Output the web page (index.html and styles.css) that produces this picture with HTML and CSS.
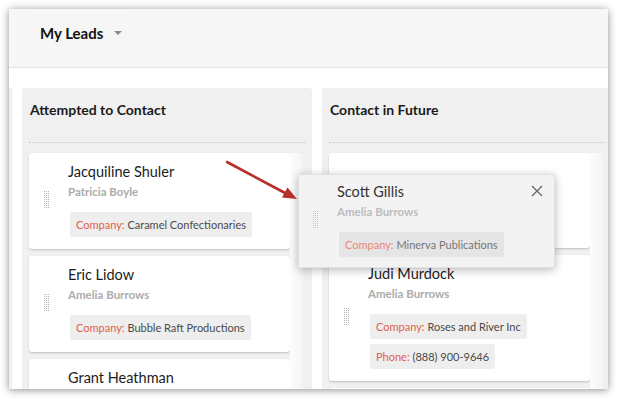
FILE: index.html
```html
<!DOCTYPE html>
<html lang="en">
<head>
    <meta charset="UTF-8">
    <meta name="viewport" content="width=device-width, initial-scale=1.0">
    <title>My Leads - Kanban</title>
    <link rel="stylesheet" href="styles.css">
</head>
<body>
    <div class="window">
        <div class="topbar">
            <div class="view-picker">
                <span class="view-name">My Leads</span>
                <span class="caret"></span>
            </div>
        </div>

        <div class="board">
            <div class="column stub"></div>

            <div class="column">
                <div class="column-head">Attempted to Contact</div>
                <div class="lane">
                    <div class="cards">
                        <div class="card">
                            <span class="grip"></span>
                            <div class="card-body">
                                <div class="name">Jacquiline Shuler</div>
                                <div class="owner">Patricia Boyle</div>
                                <div class="tags">
                                    <span class="tag"><em>Company:</em> Caramel Confectionaries</span>
                                </div>
                            </div>
                        </div>
                        <div class="card">
                            <span class="grip"></span>
                            <div class="card-body">
                                <div class="name">Eric Lidow</div>
                                <div class="owner">Amelia Burrows</div>
                                <div class="tags">
                                    <span class="tag"><em>Company:</em> Bubble Raft Productions</span>
                                </div>
                            </div>
                        </div>
                        <div class="card">
                            <div class="card-body indent">
                                <div class="name">Grant Heathman</div>
                            </div>
                        </div>
                    </div>
                    <div class="scroll-track"></div>
                </div>
            </div>

            <div class="column">
                <div class="column-head">Contact in Future</div>
                <div class="lane">
                    <div class="cards">
                        <div class="card placeholder"></div>
                        <div class="card">
                            <span class="grip"></span>
                            <div class="card-body">
                                <div class="name">Judi Murdock</div>
                                <div class="owner">Amelia Burrows</div>
                                <div class="tags">
                                    <span class="tag"><em>Company:</em> Roses and River Inc</span>
                                    <span class="tag"><em>Phone:</em> (888) 900-9646</span>
                                </div>
                            </div>
                        </div>
                        <div class="card placeholder"></div>
                    </div>
                    <div class="scroll-track"></div>
                </div>
            </div>
        </div>

        <!-- card being dragged -->
        <div class="card dragging">
            <span class="grip"></span>
            <div class="card-body">
                <div class="name">Scott Gillis</div>
                <div class="owner">Amelia Burrows</div>
                <div class="tags">
                    <span class="tag"><em>Company:</em> Minerva Publications</span>
                </div>
            </div>
            <svg class="close" width="12" height="12" viewBox="0 0 12 12">
                <path d="M1 1 L11 11 M11 1 L1 11" stroke="#666" stroke-width="1.3" fill="none"/>
            </svg>
        </div>
    </div>

    <!-- callout arrow -->
    <svg class="callout" width="617" height="399" viewBox="0 0 617 399">
        <line x1="227" y1="162" x2="286" y2="193.5" stroke="#b5302a" stroke-width="2.6" stroke-linecap="round"/>
        <polygon points="297,199 282,197.4 287.5,187.4" fill="#b5302a"/>
    </svg>
</body>
</html>
```

FILE: styles.css
```css
* {
    box-sizing: border-box;
}

body {
    margin: 0;
    padding: 9px;
    background: #fff;
    font-family: Lato, "Open Sans", Arial, sans-serif;
    color: #1f1f1f;
}

.window {
    position: relative;
    width: 599px;
    height: 380px;
    overflow: hidden;
    background: #fff;
    box-shadow: 0 1px 8px rgba(0, 0, 0, 0.45);
}

.topbar {
    height: 59px;
    background: #f7f7f7;
    border-bottom: 1px solid #e4e4e4;
    padding: 6px 0 0 21px;
}

.view-picker {
    display: inline-flex;
    align-items: center;
    gap: 11px;
    height: 35px;
    padding: 0 12px 0 10px;
    background: #f6f6f6;
    border-radius: 3px;
}

.view-name {
    font-size: 15px;
    font-weight: 700;
    color: #111;
}

.caret {
    width: 0;
    height: 0;
    border-left: 4px solid transparent;
    border-right: 4px solid transparent;
    border-top: 4px solid #8a8a8a;
    margin-top: 1px;
}

.board {
    display: flex;
    gap: 10px;
    padding-top: 20px;
}

.column {
    flex: none;
    width: 290px;
    height: 320px;
    background: #f0f0f0;
    border-radius: 3px 3px 0 0;
}

.column.stub {
    width: 3px;
    border-radius: 0;
}

.column-head {
    height: 55px;
    margin: 0 7px;
    padding: 13px 0 0 1px;
    border-bottom: 1px dotted #c6c6c6;
    font-size: 14px;
    line-height: 18px;
    font-weight: 700;
    color: #1a1a1a;
}

.lane {
    display: flex;
    padding-left: 7px;
    margin-top: 10px;
}

.cards {
    width: 261px;
    display: flex;
    flex-direction: column;
    gap: 7px;
}

.scroll-track {
    width: 13px;
    height: 260px;
    background: linear-gradient(90deg, #fdfdfd, #f4f4f4);
}

.card {
    display: flex;
    align-items: center;
    background: #fff;
    border-radius: 3px;
    box-shadow: 0 1px 2px rgba(0, 0, 0, 0.2);
    padding: 9px 0 12px 14px;
}

.card.placeholder {
    height: 95px;
}

.grip {
    flex: none;
    width: 6px;
    height: 18px;
    margin-right: 19px;
    background: conic-gradient(from 90deg at 1px 1px, transparent 75%, #b4b4b4 0) 0 0 / 2px 2px;
}

.card-body {
    display: flex;
    flex-direction: column;
}

.card-body.indent {
    margin-left: 25px;
}

.name {
    font-size: 14.5px;
    line-height: 18px;
    padding-top: 1px;
    color: #1c1c1c;
}

.owner {
    margin-top: 4px;
    font-size: 11.5px;
    line-height: 14px;
    font-weight: 700;
    color: #ababab;
}

.tags {
    display: flex;
    flex-direction: column;
    align-items: flex-start;
    gap: 5px;
    margin: 13px 0 0 2px;
}

.tag {
    background: #eee;
    border-radius: 2px;
    padding: 5px 6px;
    font-size: 11px;
    line-height: 15px;
    color: #4a4a4a;
}

.tag em {
    font-style: normal;
    color: #e0604f;
}

.dragging {
    position: absolute;
    left: 289px;
    top: 165px;
    width: 257px;
    height: 94px;
    background: rgba(243, 243, 243, 0.97);
    border: 1px solid #e0e0e0;
    border-radius: 2px;
    box-shadow: 0 2px 10px rgba(0, 0, 0, 0.28);
    padding-left: 13px;
    z-index: 2;
}

.dragging .name {
    color: #333;
}

.dragging .owner {
    color: #bcbcbc;
}

.dragging .tag {
    background: #e5e5e5;
    color: #777;
}

.dragging .tag em {
    color: #ea8577;
}

.dragging .grip {
    background: conic-gradient(from 90deg at 1px 1px, transparent 75%, #c4c4c4 0) 0 0 / 2px 2px;
}

.close {
    position: absolute;
    top: 10px;
    right: 11px;
}

.callout {
    position: absolute;
    left: 0;
    top: 0;
    pointer-events: none;
    z-index: 5;
}
```
